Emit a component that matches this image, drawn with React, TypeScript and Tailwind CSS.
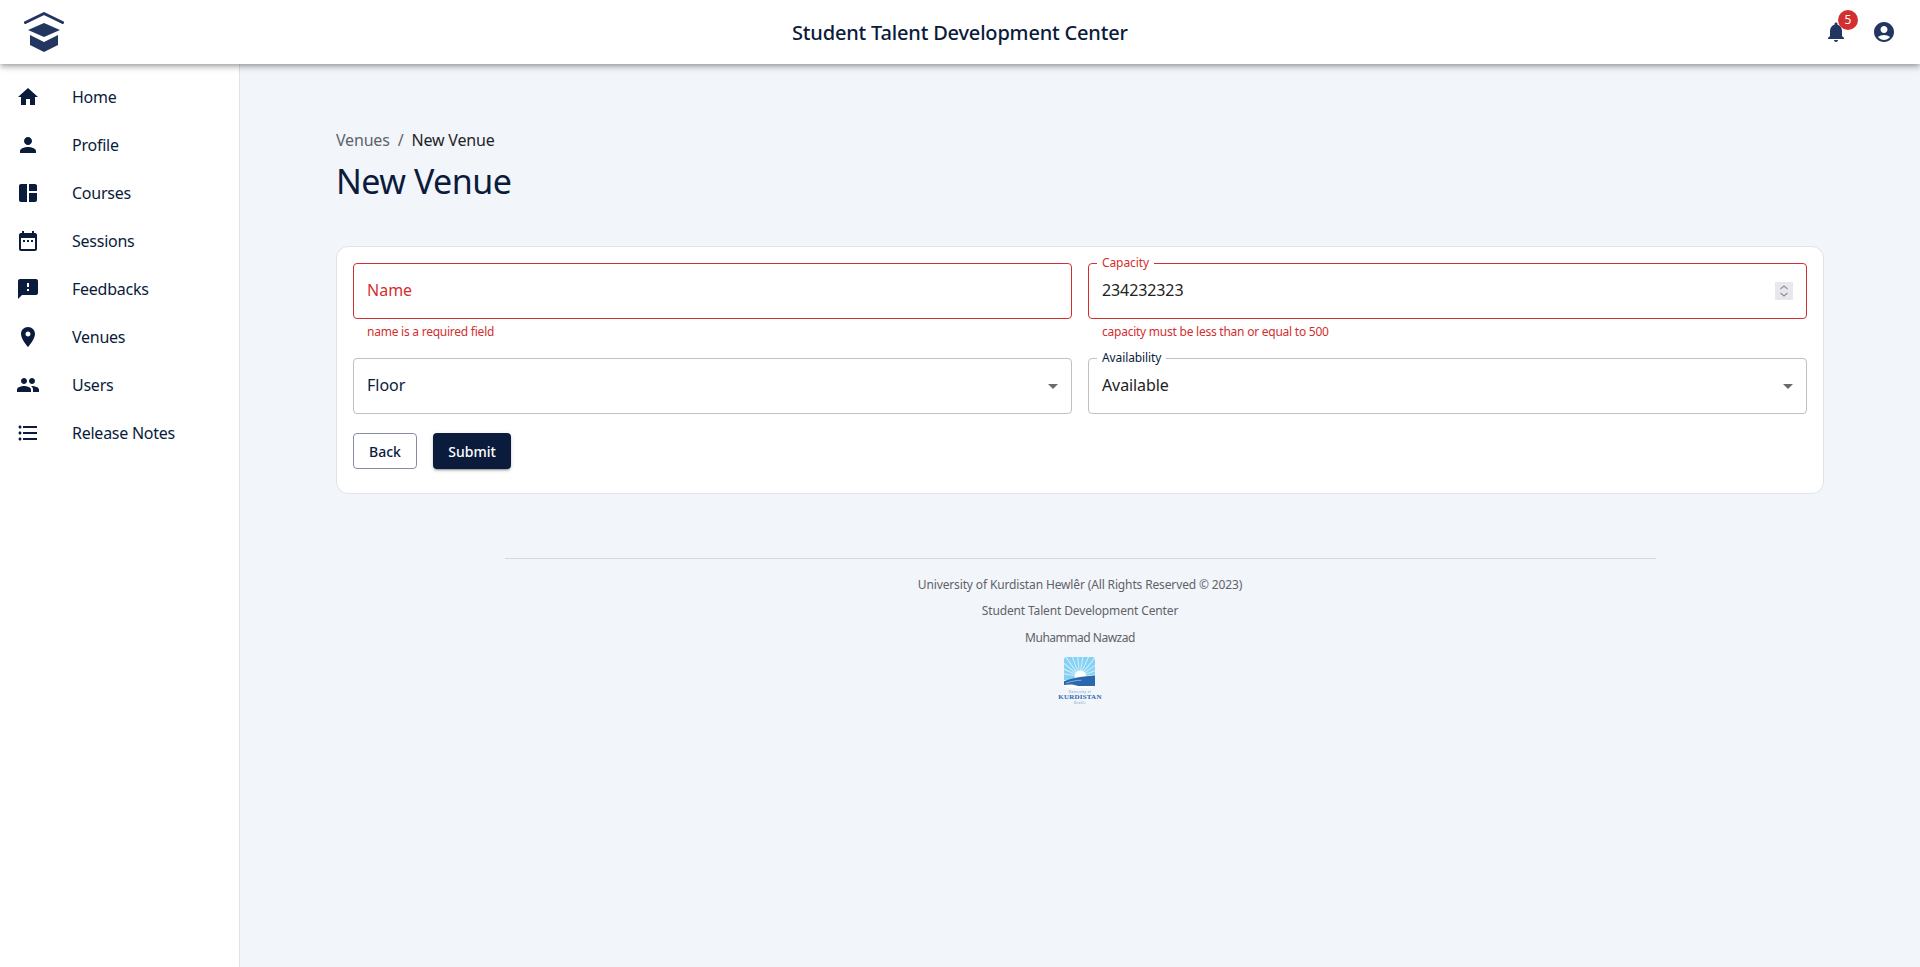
import type { ReactNode } from "react";

const font = "font-['Noto_Sans','Liberation_Sans',sans-serif]";

const navItems = [
  { label: "Home", d: "M10 20v-6h4v6h5v-8h3L12 3 2 12h3v8z" },
  { label: "Profile", d: "M12 12c2.21 0 4-1.79 4-4s-1.79-4-4-4-4 1.79-4 4 1.79 4 4 4zm0 2c-2.67 0-8 1.34-8 4v2h16v-2c0-2.66-5.33-4-8-4z" },
  { label: "Courses", d: "M11 21H5c-1.1 0-2-.9-2-2V5c0-1.1.9-2 2-2h6v18zm2 0h6c1.1 0 2-.9 2-2v-7h-8v9zm8-11V5c0-1.1-.9-2-2-2h-6v7h8z" },
  { label: "Sessions", d: "M9 11H7v2h2v-2zm4 0h-2v2h2v-2zm4 0h-2v2h2v-2zm2-7h-1V2h-2v2H8V2H6v2H5c-1.11 0-1.99.9-1.99 2L3 20c0 1.1.89 2 2 2h14c1.1 0 2-.9 2-2V6c0-1.1-.9-2-2-2zm0 16H5V9h14v11z" },
  { label: "Feedbacks", d: "M20 2H4c-1.1 0-1.99.9-1.99 2L2 22l4-4h14c1.1 0 2-.9 2-2V4c0-1.1-.9-2-2-2zm-7 12h-2v-2h2v2zm0-4h-2V6h2v4z" },
  { label: "Venues", d: "M12 2C8.13 2 5 5.13 5 9c0 5.25 7 13 7 13s7-7.75 7-13c0-3.87-3.13-7-7-7zm0 9.5c-1.38 0-2.5-1.12-2.5-2.5s1.12-2.5 2.5-2.5 2.5 1.12 2.5 2.5-1.12 2.5-2.5 2.5z" },
  { label: "Users", d: "M16 11c1.66 0 2.99-1.34 2.99-3S17.66 5 16 5c-1.66 0-3 1.34-3 3s1.34 3 3 3zm-8 0c1.66 0 2.99-1.34 2.99-3S9.66 5 8 5C6.34 5 5 6.34 5 8s1.34 3 3 3zm0 2c-2.33 0-7 1.17-7 3.5V19h14v-2.5c0-2.33-4.67-3.5-7-3.5zm8 0c-.29 0-.62.02-.97.05 1.16.84 1.97 1.97 1.97 3.45V19h6v-2.5c0-2.33-4.67-3.5-7-3.5z" },
  { label: "Release Notes", d: "M4 10.5c-.83 0-1.5.67-1.5 1.5s.67 1.5 1.5 1.5 1.5-.67 1.5-1.5-.67-1.5-1.5-1.5zm0-6c-.83 0-1.5.67-1.5 1.5S3.17 7.5 4 7.5 5.5 6.83 5.5 6 4.83 4.5 4 4.5zm0 12c-.83 0-1.5.68-1.5 1.5s.68 1.5 1.5 1.5 1.5-.68 1.5-1.5-.67-1.5-1.5-1.5zM7 19h14v-2H7v2zm0-6h14v-2H7v2zm0-8v2h14V5H7z" },
];

const rays = [-80, -65, -50, -35, -20, -5, 10, 25, 40, 55, 70, 85];

function Icon({ d, className }: { d: string; className: string }) {
  return (
    <svg viewBox="0 0 24 24" fill="currentColor" className={className}>
      <path d={d} />
    </svg>
  );
}

function Logo() {
  return (
    <svg viewBox="0 0 40 40" className="h-10 w-10 text-[#233660]">
      <path d="M1.5 10.5 20 1.5l18.5 9" fill="none" stroke="currentColor" strokeWidth="3" strokeLinecap="round" strokeLinejoin="round" />
      <path d="M4 18l16-7 16 7-16 7z" fill="currentColor" />
      <path d="M6 23l14 7 14-7v10l-14 7-14-7z" fill="currentColor" />
    </svg>
  );
}

function UkhLogo() {
  return (
    <div className="flex flex-col items-center">
      <svg viewBox="0 0 32 32" className="h-[31px] w-[31px]">
        <defs>
          <clipPath id="ukh-square">
            <rect width="32" height="32" rx="3" />
          </clipPath>
        </defs>
        <g clipPath="url(#ukh-square)">
          <rect width="32" height="32" fill="#86d2f4" />
          {rays.map((angle) => (
            <path key={angle} d="M16 20V-10" stroke="#d4f0fb" strokeWidth="1" transform={`rotate(${angle} 16 20)`} />
          ))}
          <circle cx="17" cy="20" r="6" fill="#ffffff" />
          <rect y="24" width="32" height="8" fill="#ffffff" />
          <path d="M0 25C8 22 15 20 32 19v11H15c-5-2-10-2-15-1z" fill="#2a67ad" />
          <path d="M2 27c6-2 11-3 16-3" fill="none" stroke="#a9d6ef" strokeWidth=".7" />
        </g>
      </svg>
      <span className="mt-[2px] font-['Liberation_Serif',serif] text-[3px] leading-[4px] tracking-[0.5px] text-[#5b86b8]">University of</span>
      <span className="font-['Liberation_Serif',serif] text-[7px] leading-[7px] font-bold tracking-[0.2px] text-[#2a67ad]">KURDISTAN</span>
      <span className="font-['Liberation_Serif',serif] text-[3px] leading-[4px] tracking-[0.5px] text-[#5b86b8]">Hewlêr</span>
    </div>
  );
}

function Caret() {
  return (
    <svg viewBox="0 0 24 24" fill="currentColor" className="h-6 w-6 text-[#6b6b6b]">
      <path d="M7 10l5 5 5-5z" />
    </svg>
  );
}

function Field({ label, error, invalid, select, children }: { label?: string; error?: string; invalid?: boolean; select?: boolean; children: ReactNode }) {
  return (
    <div className="flex flex-col">
      <div className={`relative flex h-14 items-center rounded border pl-[13px] ${select ? "pr-[6px]" : "pr-[13px]"} ${invalid ? "border-[#d32f2f]" : "border-[#c0c0c0]"}`}>
        {label && (
          <span className={`absolute top-[-9px] left-[8px] bg-white px-[5px] text-xs leading-4 tracking-[-0.1px] ${invalid ? "text-[#d32f2f]" : "text-[#0a1b3c]"}`}>
            {label}
          </span>
        )}
        {children}
      </div>
      {error && <p className="mx-[14px] mt-[3px] h-5 text-xs leading-5 tracking-[-0.24px] text-[#d32f2f]">{error}</p>}
    </div>
  );
}

export default function App() {
  return (
    <div className={`flex h-[967px] flex-col overflow-hidden bg-[#f2f5fa] ${font} text-[#0a1b3c]`}>
      <header className="relative z-10 flex h-16 shrink-0 items-center justify-between bg-white pr-6 pl-6 shadow-[0_2px_4px_-1px_rgba(0,0,0,0.2),0_4px_5px_0_rgba(0,0,0,0.14),0_1px_10px_0_rgba(0,0,0,0.12)]">
        <Logo />
        <h1 className="absolute top-[17px] left-[792px] text-xl leading-8 font-medium tracking-[-0.18px]">Student Talent Development Center</h1>
        <div className="flex items-center gap-6 text-[#233660]">
          <div className="relative">
            <Icon className="h-6 w-6" d="M12 22c1.1 0 2-.9 2-2h-4c0 1.1.89 2 2 2zm6-6v-5c0-3.07-1.64-5.64-4.5-6.32V4c0-.83-.67-1.5-1.5-1.5s-1.5.67-1.5 1.5v.68C7.63 5.36 6 7.92 6 11v5l-2 2v1h16v-1l-2-2z" />
            <span className="absolute top-[-10px] left-[14px] flex h-5 w-5 items-center justify-center rounded-full bg-[#d32f2f] text-xs text-white">5</span>
          </div>
          <Icon className="h-6 w-6" d="M12 2C6.48 2 2 6.48 2 12s4.48 10 10 10 10-4.48 10-10S17.52 2 12 2zm0 4c1.93 0 3.5 1.57 3.5 3.5S13.93 13 12 13s-3.5-1.57-3.5-3.5S10.07 6 12 6zm0 14c-2.03 0-4.43-.82-6.14-2.88C7.55 15.8 9.68 15 12 15s4.45.8 6.14 2.12C16.43 19.18 14.03 20 12 20z" />
        </div>
      </header>

      <div className="flex min-h-0 flex-1">
        <aside className="w-[240px] shrink-0 border-r border-[#dfe2e8] bg-white pt-[9px]">
          {navItems.map((item) => (
            <a key={item.label} className="flex h-12 items-center pl-4 text-base tracking-[-0.25px]">
              <Icon className="mr-[32px] h-6 w-6 shrink-0" d={item.d} />
              {item.label}
            </a>
          ))}
        </aside>

        <main className="flex-1 pt-[64px] pr-[96px] pl-[96px]">
          <nav className="flex h-6 items-center text-base leading-6 tracking-[-0.18px] text-[#5f6368]">
            <span>Venues</span>
            <span className="mx-2">/</span>
            <span className="text-[#1f2328]">New Venue</span>
          </nav>
          <h2 className="mt-[4px] text-[34px] leading-[50px] font-normal tracking-[-0.5px]">New Venue</h2>

          <section className="mt-[40px] rounded-xl border border-[#e0e2e6] bg-white px-4 pt-4 pb-6">
            <div className="grid grid-cols-2 gap-x-4">
              <Field invalid error="name is a required field">
                <span className="mb-[2px] text-base text-[#d32f2f]">Name</span>
              </Field>
              <Field invalid label="Capacity" error="capacity must be less than or equal to 500">
                <span className="mb-[2px] flex-1 text-base tracking-[-0.1px] text-[#222]">234232323</span>
                <span className="flex h-[18px] w-[18px] flex-col items-center justify-center bg-[#e8e8ec] text-[#8f8f99]">
                  <svg viewBox="0 0 12 14" className="h-[14px] w-3" fill="none" stroke="currentColor" strokeWidth="1.2">
                    <path d="M2.5 5 6 2l3.5 3M2.5 9 6 12l3.5-3" />
                  </svg>
                </span>
              </Field>
            </div>
            <div className="mt-4 grid grid-cols-2 gap-x-4">
              <Field select>
                <span className="mb-[2px] flex-1 text-base">Floor</span>
                <Caret />
              </Field>
              <Field select label="Availability">
                <span className="mb-[2px] flex-1 text-base tracking-[-0.1px] text-[#222]">Available</span>
                <Caret />
              </Field>
            </div>
            <div className="mt-[19px] flex gap-4">
              <button className="h-9 w-16 rounded border border-[#858da0] pt-px text-sm font-medium">Back</button>
              <button className="h-9 w-[78px] rounded bg-[#0a1b3c] pt-px text-sm font-medium text-white shadow-[0_3px_1px_-2px_rgba(0,0,0,0.2),0_2px_2px_0_rgba(0,0,0,0.14),0_1px_5px_0_rgba(0,0,0,0.12)]">Submit</button>
            </div>
          </section>

          <footer className="mx-auto mt-[64px] flex w-[1151px] flex-col items-center border-t border-[#d4d7dd] pt-[13px] text-xs leading-[26.4px] tracking-[-0.14px] text-[#5f6368]">
            <p>University of Kurdistan Hewlêr (All Rights Reserved © 2023)</p>
            <p>Student Talent Development Center</p>
            <p className="tracking-[-0.49px]">Muhammad Nawzad</p>
            <div className="mt-[6px]">
              <UkhLogo />
            </div>
          </footer>
        </main>
      </div>
    </div>
  );
}
